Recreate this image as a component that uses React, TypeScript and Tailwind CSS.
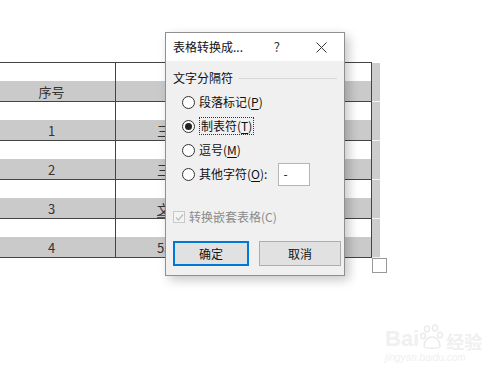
import React from 'react';

const rows = [
  { no: '序号', name: '姓名', head: true },
  { no: '1', name: '三年级一班学生' },
  { no: '2', name: '三年级二班学生' },
  { no: '3', name: '文科实验班学生', spell: true },
  { no: '4', name: '5年级三班学生' },
];

const Radio = ({ checked }: { checked?: boolean }) => (
  <span className="w-[13px] h-[13px] rounded-full border border-[#333] bg-white flex items-center justify-center shrink-0">
    {checked && <span className="w-[7px] h-[7px] rounded-full bg-[#222]" />}
  </span>
);

const Accel = ({ k }: { k: string }) => (
  <span>
    (<span className="underline underline-offset-2">{k}</span>)
  </span>
);

const App = () => {
  return (
    <div
      className="relative w-[500px] h-[378px] bg-white overflow-hidden"
      style={{ fontFamily: '"Noto Sans CJK SC", "Noto Sans", sans-serif' }}
    >
      {/* table in the document */}
      <div className="pt-[62px]">
        <div className="flex">
          <div className="w-[372px] border-t border-r border-[#444]">
            {rows.map((r, i) => (
              <div key={i} className="grid grid-cols-[116px_1fr] border-b border-[#444] h-[39px]">
                <div className="border-r border-[#444] flex flex-col">
                  <div className="h-[18px]" />
                  <div className="h-[20px] bg-[#cacaca] flex items-center justify-center pr-[12px] text-[13px] text-[#333] leading-none">
                    {r.no}
                  </div>
                </div>
                <div className="flex flex-col">
                  <div className="h-[18px]" />
                  <div
                    className={
                      'h-[20px] bg-[#cacaca] flex items-center text-[13px] text-[#333] leading-none ' +
                      (r.head ? 'pl-[110px]' : 'pl-[41px]')
                    }
                  >
                    <span className={r.spell ? 'underline decoration-double decoration-blue-600' : ''}>{r.name}</span>
                  </div>
                </div>
              </div>
            ))}
          </div>
          <div className="w-[8px] mt-[1px]">
            {rows.map((_, i) => (
              <div key={i} className="h-[39px] bg-[#cdcdcd] border-b border-[#f4f4f4]" />
            ))}
          </div>
        </div>
        <div className="ml-[372px] w-[15px] h-[15px] border border-[#999] bg-white" />
      </div>

      {/* dialog */}
      <div className="absolute left-[165px] top-[32px] w-[180px] border border-[#8f8f8f] bg-[#f0f0f0] shadow-[4px_4px_10px_rgba(0,0,0,0.22)] text-[12px] text-[#111]">
        <div className="h-[28px] bg-white flex items-center pl-[7px] pr-[14px]">
          <span className="flex-1">表格转换成...</span>
          <span className="mr-[36px] text-[13px] text-[#333]">?</span>
          <svg width="11" height="11" viewBox="0 0 11 11" className="mr-[3px]">
            <path d="M0.5 0.5 L10.5 10.5 M10.5 0.5 L0.5 10.5" stroke="#333" strokeWidth="1" fill="none" />
          </svg>
        </div>
        <div className="pl-[7px] pr-[3px] pb-[9px]">
          <div className="mt-[9px] mr-[4px] h-[16px] flex items-center leading-none">
            <span>文字分隔符</span>
            <span className="flex-1 ml-[6px] h-px bg-[#d8d8d8]" />
          </div>
          <div className="mt-[4px] pl-[9px] flex flex-col">
            <div className="h-[24px] flex items-center gap-[4px]">
              <Radio />
              <span>段落标记<Accel k="P" /></span>
            </div>
            <div className="h-[24px] flex items-center gap-[4px]">
              <Radio checked />
              <span className="border border-dotted border-[#333] px-[1px] leading-[16px]">制表符<Accel k="T" /></span>
            </div>
            <div className="h-[24px] flex items-center gap-[4px]">
              <Radio />
              <span>逗号<Accel k="M" /></span>
            </div>
            <div className="h-[24px] flex items-center gap-[4px]">
              <Radio />
              <span>其他字符<Accel k="O" />:</span>
              <span className="ml-[7px] w-[32px] h-[23px] bg-white border border-[#b5b5b5] flex items-center pl-[4px] text-[12px]">-</span>
            </div>
          </div>
          <div className="mt-[23px] h-[16px] flex items-center gap-[4px] text-[#8a8a8a]">
            <span className="w-[12px] h-[12px] border border-[#c8c8c8] bg-[#f4f4f4] flex items-center justify-center">
              <svg width="9" height="9" viewBox="0 0 9 9">
                <path d="M1 4.5 L3.5 7 L8 1.5" stroke="#bcbcbc" strokeWidth="1.2" fill="none" />
              </svg>
            </span>
            <span>转换嵌套表格(C)</span>
          </div>
          <div className="mt-[16px] flex justify-between">
            <button className="w-[76px] h-[25px] bg-[#e1e1e1] border-2 border-[#0078d7] text-[12px] text-[#111]">
              确定
            </button>
            <button className="w-[82px] h-[25px] bg-[#e1e1e1] border border-[#adadad] text-[12px] text-[#111]">
              取消
            </button>
          </div>
        </div>
      </div>

      {/* watermark */}
      <div className="absolute left-[385px] top-[324px] text-[#f0f0f0] select-none">
        <div className="flex items-end">
          <span className="text-[22px] font-bold leading-none" style={{ fontFamily: '"Liberation Sans", sans-serif' }}>Bai</span>
          <svg width="24" height="26" viewBox="0 0 24 26" className="mx-[1px]">
            <g fill="none" stroke="#ebebeb" strokeWidth="1.5">
              <ellipse cx="7" cy="5" rx="2.5" ry="3" />
              <ellipse cx="15" cy="4" rx="2.5" ry="3" />
              <ellipse cx="3" cy="12" rx="2.3" ry="2.8" />
              <ellipse cx="20" cy="11" rx="2.3" ry="2.8" />
              <path d="M4 22 C4 16 8 13 12 13 C16 13 20 16 20 22 C20 25 4 25 4 22 Z" />
            </g>
          </svg>
          <span className="text-[18px] font-bold leading-none ml-[1px]">经验</span>
        </div>
        <div className="text-[10px] leading-none mt-[3px] italic" style={{ fontFamily: '"Liberation Sans", sans-serif' }}>
          jingyan.baidu.com
        </div>
      </div>
    </div>
  );
};

export default App;
